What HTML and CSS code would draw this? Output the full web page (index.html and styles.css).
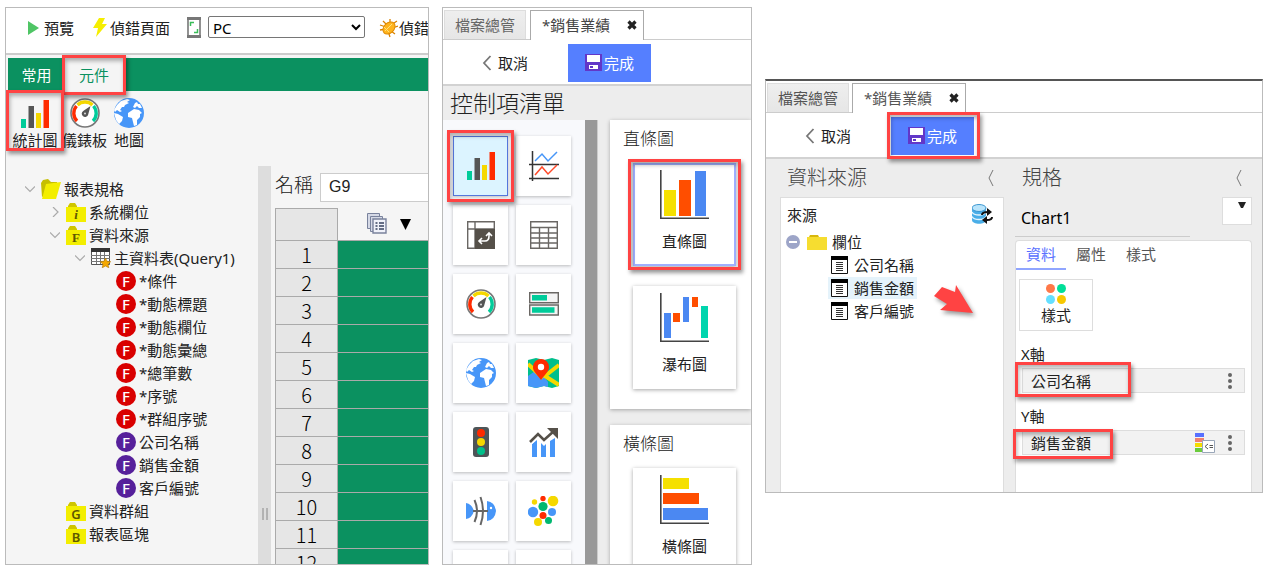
FILE: index.html
```
<!DOCTYPE html>
<html lang="zh-Hant">
<head>
<meta charset="utf-8">
<title>報表設計</title>
<link rel="stylesheet" href="styles.css">
</head>
<body>
<svg class="sprite" aria-hidden="true">
  <symbol id="chart" viewBox="0 0 28 28"><path fill="#00cc9a" d="M0 19h5v9H0z"/><path fill="#555" d="M7.500 6h5.500v22H7.500z"/><path fill="#f5d800" d="M15 13h5v15h-5z"/><path fill="#ff2b00" d="M22.500 0H28v28h-5.500z"/></symbol>
  <symbol id="gauge" viewBox="0 0 30 30"><circle cx="15" cy="15" r="14" fill="#fff" stroke="#777" stroke-width="1.600"/><g fill="none" stroke-width="3.400"><path stroke="#ff2b00" d="M7 23A11 11 0 0 1 6.500 8"/><path stroke="#f5d800" d="M7.500 7a11 11 0 0 1 15 0"/><path stroke="#00cc9a" d="M23.500 8A11 11 0 0 1 23 23"/></g><path fill="#555" d="M20.500 8l-2.300 8.500a3.300 3.300 0 1 1-5-3.600z"/><circle cx="15" cy="15.500" r="1" fill="#ddd"/></symbol>
  <symbol id="globe" viewBox="0 0 30 30"><circle cx="15" cy="15" r="15" fill="#4796f8"/><path fill="#fff" d="M3 7l4-4 6-2 3 1-3 2 2 1-4 2-1 2-2 0-2 3 2 1-2 1-3-2-2 2-1-2zM0 15l4 1 5 3-1 4-3 3-3-4zM17 13l3-2 5 1 3 3-2 1 0 3-3 3 0 5-3 1-2-8-4-1 0-4zM21 5l2-1 1 2 2 0 2 4-3 0-2-2-2 2-2-1z"/></symbol>
  <symbol id="save" viewBox="0 0 17 17"><path fill="#6237c8" d="M0 0h17v17H0z"/><path fill="#fff" d="M2 1h13v7H2zM4 11h9v4H4z"/><path fill="#6237c8" d="M5 12h3v2H5z"/></symbol>
  <symbol id="back" viewBox="0 0 10 16"><path d="M8.500 1L2 8l6.500 7" fill="none" stroke="#777" stroke-width="1.800"/></symbol>
  <symbol id="thin" viewBox="0 0 8 18"><path d="M6 1L2 9l4 8" fill="none" stroke="#777"/></symbol>
  <symbol id="close" viewBox="0 0 10 10"><path d="M1.500 1.500l7 7m0-7l-7 7" stroke="#222" stroke-width="3.200"/></symbol>
  <symbol id="down" viewBox="0 0 10 10"><path d="M0 2.500l5 5 5-5" fill="none" stroke="#aaa" stroke-width="1.200"/></symbol>
  <symbol id="right" viewBox="0 0 10 10"><path d="M3 0l5 5-5 5" fill="none" stroke="#aaa" stroke-width="1.200"/></symbol>
  <symbol id="folder" viewBox="0 0 20 20"><path fill="#cfc500" d="M2 3l2-3h5l2 3v3H2z"/><path fill="#f3ee00" d="M0 4h20v15H0z"/></symbol>
  <symbol id="opened" viewBox="0 0 20 20"><path fill="#c6bf00" d="M0 4l2-3 5-1 3 3h6v5L1 18z"/><path fill="#f3ee00" d="M5 5l15-2-5 17H1z"/></symbol>
  <symbol id="sheet" viewBox="0 0 20 20"><path fill="#fff" stroke="#555" d="M.5.5h18v16H.5z"/><path fill="#333" d="M0 0h19v4H0z"/><path stroke="#777" d="M0 7.500h19M0 10.500h19M0 13.500h19M5.500 4v12M9.500 4v12M13.500 4v12"/><path fill="#f4a800" stroke="#b67a00" stroke-width=".6" d="M14.500 10l1.500 3.200 3.700.5-2.700 2.500.8 3.600-3.300-1.800-3.300 1.800.8-3.600-2.700-2.500 3.700-.5z"/></symbol>
  <symbol id="field" viewBox="0 0 17 18"><path fill="#fff" stroke="#111" d="M.5.5h16v17H.5z"/><path fill="#000" d="M0 0h17v4H0z"/><path stroke="#333" d="M5 6.500h7M5 8.500h7M5 10.500h7M5 12.500h7M5 14.500h7"/></symbol>
  <symbol id="dots" viewBox="0 0 4 16"><g fill="#666"><circle cx="2" cy="2" r="2"/><circle cx="2" cy="8" r="2"/><circle cx="2" cy="14" r="2"/></g></symbol>
</svg>

<main class="page">
  <section class="panel designer">
    <div class="topbar">
      <button class="tool preview"><svg width="11" height="14" viewBox="0 0 11 14"><path fill="#4fc565" d="M0 0l11 7-11 7z"/></svg>預覽</button>
      <button class="tool debug"><svg width="14" height="19" viewBox="0 0 14 19"><path fill="#f5ee00" d="M6 0h6L9 6h5L3 19l2-9H0z"/></svg>偵錯頁面</button>
      <label class="device"><svg width="14" height="21" viewBox="0 0 14 21" aria-label="裝置"><path fill="none" stroke="#777" stroke-width="1.600" d="M1 1h12v19H1z"/><path fill="#777" d="M0 0h14v3H0zM0 18h14v3H0z"/><path fill="none" stroke="#39bd58" stroke-width="1.500" d="M3.500 9V5.500H7M10.500 12v3.500H7"/></svg>
        <select><option>PC</option></select></label>
      <button class="tool bug"><svg width="19" height="20" viewBox="0 0 19 20"><path d="M4 3l5 5m2-7v6m7-4l-6 4m7 1l-6 2m3 6l-4-3m-1 6l-2-6M1 12l6-1M1 7l6 2" stroke="#d98200" stroke-width="1.300"/><ellipse cx="10" cy="10" rx="7" ry="5" transform="rotate(-45 10 10)" fill="#ffb41e" stroke="#e08a00"/><path d="M6 13l7-7M5 9l5 5" stroke="#ffe27a"/></svg>偵錯</button>
    </div>
    <nav class="ribbon-tabs">
      <button class="ribbon-tab">常用</button>
      <button class="ribbon-tab active marked">元件</button>
    </nav>
    <div class="ribbon">
      <button class="gadget marked"><svg width="28" height="28"><use href="#chart"/></svg>統計圖</button>
      <button class="gadget"><svg width="30" height="30"><use href="#gauge"/></svg>儀錶板</button>
      <button class="gadget"><svg width="30" height="30"><use href="#globe"/></svg>地圖</button>
    </div>
    <div class="workspace">
      <ul class="tree">
        <li class="level0"><svg width="10" height="10"><use href="#down"/></svg><svg width="20" height="20"><use href="#opened"/></svg>報表規格</li>
        <li class="level1"><svg width="10" height="10"><use href="#right"/></svg><span class="folder"><svg width="20" height="20"><use href="#folder"/></svg><i>i</i></span>系統欄位</li>
        <li class="level1"><svg width="10" height="10"><use href="#down"/></svg><span class="folder serif"><svg width="20" height="20"><use href="#folder"/></svg><b>F</b></span>資料來源</li>
        <li class="level2"><svg width="10" height="10"><use href="#down"/></svg><svg width="20" height="20"><use href="#sheet"/></svg>主資料表(Query1)</li>
        <li class="level3"><span class="dot">F</span>*條件</li>
        <li class="level3"><span class="dot">F</span>*動態標題</li>
        <li class="level3"><span class="dot">F</span>*動態欄位</li>
        <li class="level3"><span class="dot">F</span>*動態彙總</li>
        <li class="level3"><span class="dot">F</span>*總筆數</li>
        <li class="level3"><span class="dot">F</span>*序號</li>
        <li class="level3"><span class="dot">F</span>*群組序號</li>
        <li class="level3"><span class="dot violet">F</span>公司名稱</li>
        <li class="level3"><span class="dot violet">F</span>銷售金額</li>
        <li class="level3"><span class="dot violet">F</span>客戶編號</li>
        <li class="level1 leaf"><span class="folder"><svg width="20" height="20"><use href="#folder"/></svg><b>G</b></span>資料群組</li>
        <li class="level1 leaf"><span class="folder"><svg width="20" height="20"><use href="#folder"/></svg><b>B</b></span>報表區塊</li>
      </ul>
      <div class="splitter"><svg width="6" height="12" viewBox="0 0 6 12"><path d="M1 0v12M5 0v12" stroke="#888"/></svg></div>
      <div class="canvas">
        <div class="name-row"><label for="cell">名稱</label><input id="cell" value="G9"></div>
        <table class="grid">
          <thead><tr><th></th><td><span class="column-head"><svg width="20" height="22" viewBox="0 0 20 22"><g fill="#d5d9e6" stroke="#79829c"><path d="M.5.5h12v15H.5z"/><path d="M3.500 3.500h12v15h-12z"/><path fill="#f0f2fa" stroke-width="1.400" d="M6 6h13v14H6z"/></g><path d="M8.500 10h2m1.500 0h5m-8.500 3h2m1.500 0h5m-8.500 3h2m1.500 0h5" stroke="#36415f" stroke-width="1.700"/></svg><svg width="11" height="11" viewBox="0 0 11 11"><path d="M0 0h11L5.500 11z"/></svg></span></td></tr></thead>
          <tbody>
            <tr><th>1</th><td></td></tr><tr><th>2</th><td></td></tr><tr><th>3</th><td></td></tr><tr><th>4</th><td></td></tr>
            <tr><th>5</th><td></td></tr><tr><th>6</th><td></td></tr><tr><th>7</th><td></td></tr><tr><th>8</th><td></td></tr>
            <tr><th>9</th><td></td></tr><tr><th>10</th><td></td></tr><tr><th>11</th><td></td></tr><tr><th>12</th><td></td></tr>
          </tbody>
        </table>
      </div>
    </div>
  </section>

  <section class="panel chooser">
    <nav class="file-tabs">
      <button class="file-tab">檔案總管</button>
      <button class="file-tab active">*銷售業績<svg width="10" height="10"><use href="#close"/></svg></button>
    </nav>
    <div class="actions">
      <button class="cancel"><svg width="10" height="16"><use href="#back"/></svg>取消</button>
      <button class="done"><svg width="17" height="17"><use href="#save"/></svg>完成</button>
    </div>
    <h2 class="list-title">控制項清單</h2>
    <div class="chooser-body">
      <div class="tiles">
        <button class="tile selected marked" aria-label="統計圖"><svg width="28" height="28"><use href="#chart"/></svg></button>
        <button class="tile" aria-label="折線圖"><svg width="30" height="30" viewBox="0 0 30 30" fill="none"><path d="M3.500 0v30M0 13.500h30M0 27.500h30" stroke="#333" stroke-width="1.500"/><path d="M6 10l7-7 6 7 9-9" stroke="#4796f8" stroke-width="1.500"/><path d="M6 24l7-8 6 7 9-9" stroke="#ff4b2b" stroke-width="1.500"/></svg></button>
        <button class="tile" aria-label="交叉表"><svg width="28" height="28" viewBox="0 0 28 28"><path d="M.7.7h26.600v26.600H.7zM0 8h28M8 0v28" fill="none" stroke="#6a6764" stroke-width="1.400"/><path d="M8 8h20v20H8z" fill="#555049"/><path d="M12 20h6q4 0 4-5v-3m-3 3l3-3 3 3m-10 2l-3 3 3 3" fill="none" stroke="#fff" stroke-width="1.600"/></svg></button>
        <button class="tile" aria-label="表格"><svg width="28" height="28" viewBox="0 0 28 28"><path d="M.7.7h26.600v26.600H.7zM0 6.500h28M0 12h28M0 17h28M0 22h28M9.500 6.500V28M18.500 6.500V28" fill="none" stroke="#6a6764" stroke-width="1.400"/></svg></button>
        <button class="tile" aria-label="儀錶板"><svg width="30" height="30"><use href="#gauge"/></svg></button>
        <button class="tile" aria-label="進度條"><svg width="30" height="24" viewBox="0 0 30 24"><path d="M.7.7h28.600v10H.7zM.7 13h28.600v10H.7z" fill="#f4f4f4" stroke="#6a6764" stroke-width="1.400"/><path d="M3 3h15v5.500H3zM3 15.300h22.500v5.500H3z" fill="#00cc9a"/></svg></button>
        <button class="tile" aria-label="地圖"><svg width="30" height="30"><use href="#globe"/></svg></button>
        <button class="tile" aria-label="地標"><svg width="31" height="30" viewBox="0 0 31 30"><path fill="#00bf8c" d="M0 2l8-2 8 2 8-2 7 2v26l-7 2-8-2-8 2-8-2z"/><path fill="#4796f8" d="M0 18l10-7 10 13v5l-4-1-8 2-8-2z"/><path d="M0 6l15 14M31 7L17 18l14 9" stroke="#f5d800" stroke-width="4" fill="none"/><path fill="#ff2b00" d="M13 22C7 14 5 13 5 9a8 8 0 0 1 16 0c0 4-2 5-8 13z"/><circle cx="13" cy="9" r="3.200" fill="#fff"/></svg></button>
        <button class="tile" aria-label="燈號"><svg width="16" height="30" viewBox="0 0 16 30"><rect width="16" height="30" rx="3" fill="#4d5558"/><circle cx="8" cy="6" r="4" fill="#ff2b00"/><circle cx="8" cy="15" r="4" fill="#f5d800"/><circle cx="8" cy="24" r="4" fill="#00c08a"/></svg></button>
        <button class="tile" aria-label="趨勢圖"><svg width="30" height="29" viewBox="0 0 30 29"><path fill="#4796f8" d="M3 16l5-4v17H3zM12 15l3 3 2-2v13h-5zM21 13l5-3v19h-5z"/><path d="M1 14l8-8 6 6 10-9" stroke="#fff" stroke-width="6" fill="none"/><path d="M1 14l8-8 6 6 10-9" stroke="#555049" stroke-width="2.600" fill="none"/><path fill="#555049" d="M18 0h11v11z"/></svg></button>
        <button class="tile" aria-label="魚骨圖"><svg width="30" height="30" viewBox="0 0 30 30"><path fill="#4796f8" d="M0 7q6 1 8 8-2 7-8 8zM21 5q8 1 9 10-1 9-9 10z"/><path d="M7 15h15M8.500 4q5 11 0 22M14.500 1q5 14 0 28" stroke="#666" stroke-width="2" fill="none"/><circle cx="25" cy="12" r="1.200" fill="#fff"/></svg></button>
        <button class="tile" aria-label="泡泡圖"><svg width="31" height="30" viewBox="0 0 31 30"><g fill="#f5d800"><circle cx="6.500" cy="6" r="2.700"/><circle cx="25" cy="5" r="5.300"/><circle cx="10" cy="26" r="4"/></g><g fill="#ff2b00"><circle cx="15" cy="2.500" r="2.700"/><circle cx="15" cy="19.500" r="3.500"/></g><g fill="#00b870"><circle cx="15" cy="10.500" r="4.600"/><circle cx="20.500" cy="24.500" r="3.500"/></g><g fill="#4796f8"><circle cx="5" cy="16" r="5.200"/><circle cx="24" cy="16" r="4"/></g></svg></button>
        <button class="tile" aria-label="其他"></button>
        <button class="tile" aria-label="其他"></button>
      </div>
      <div class="scroller"></div>
      <div class="groups">
        <section class="group">
          <h3>直條圖</h3>
          <button class="kind selected marked"><svg width="49" height="49" viewBox="0 0 49 49"><path d="M.8 0v48.200H49" stroke="#444" stroke-width="1.600" fill="none"/><path fill="#f5e000" d="M4 20h12v26H4z"/><path fill="#ff4e00" d="M19 10h12v36H19z"/><path fill="#4b88f2" d="M35 1h11v45H35z"/></svg>直條圖</button>
          <button class="kind"><svg width="49" height="49" viewBox="0 0 49 49"><path d="M.8 0v48.200H49" stroke="#444" stroke-width="1.600" fill="none"/><path fill="#4b88f2" d="M4 20h7v25H4zM23 4h6v25h-6z"/><path fill="#ff4e00" d="M13 20h7v9h-7zM32 4h6v10h-6z"/><path fill="#00d5ae" d="M41 13h7v32h-7z"/></svg>瀑布圖</button>
        </section>
        <section class="group">
          <h3>橫條圖</h3>
          <button class="kind"><svg width="49" height="49" viewBox="0 0 49 49"><path d="M.8 0v48.200H49" stroke="#444" stroke-width="1.600" fill="none"/><path fill="#f5e000" d="M3 3h26v11H3z"/><path fill="#ff4e00" d="M3 18h36v11H3z"/><path fill="#4b88f2" d="M3 33h45v12H3z"/></svg>橫條圖</button>
        </section>
      </div>
    </div>
  </section>

  <section class="panel settings">
    <nav class="file-tabs">
      <button class="file-tab">檔案總管</button>
      <button class="file-tab active">*銷售業績<svg width="10" height="10"><use href="#close"/></svg></button>
    </nav>
    <div class="actions">
      <button class="cancel"><svg width="10" height="16"><use href="#back"/></svg>取消</button>
      <button class="done marked"><svg width="17" height="17"><use href="#save"/></svg>完成</button>
    </div>
    <div class="settings-body">
      <section class="source">
        <h2 class="section-title">資料來源<svg width="8" height="18"><use href="#thin"/></svg></h2>
        <div class="source-card">
          <div class="source-head">來源<svg width="21" height="21" viewBox="0 0 21 21"><path fill="#4aaee8" d="M0 4v12c0 5 14 5 14 0V4z"/><ellipse cx="7" cy="4" rx="7" ry="3.500" fill="#b9e4fb" stroke="#3b96d0"/><path d="M0 8c2 4 12 4 14 0M0 12.500c2 4 12 4 14 0" fill="none" stroke="#e3f5ff" stroke-width="1.500"/><path d="M10 11q0-3 6-3" fill="none" stroke="#111" stroke-width="2"/><path d="M15 4l5 4-5 4zM15 12l-5 4 5 4z" fill="#111"/><path d="M20 13q0 3-5 3" fill="none" stroke="#111" stroke-width="2"/></svg></div>
          <ul class="fields">
            <li class="root"><svg width="14" height="14" viewBox="0 0 14 14"><circle cx="7" cy="7" r="7" fill="#9da5c8"/><path d="M3 7h8" stroke="#fff" stroke-width="2"/></svg><svg width="20" height="15" viewBox="0 0 20 15"><path fill="#d8b70c" d="M2 2l1-2h8l1 2v2H2z"/><path fill="#f6dd30" d="M0 2h20v13H0z"/></svg>欄位</li>
            <li><svg width="17" height="18"><use href="#field"/></svg>公司名稱</li>
            <li class="chosen"><svg width="17" height="18"><use href="#field"/></svg>銷售金額</li>
            <li><svg width="17" height="18"><use href="#field"/></svg>客戶編號</li>
          </ul>
          <svg class="pointer" width="40" height="36" viewBox="0 0 40 36"><path fill="#ff4343" d="M0 12L8 3l13 5 1-7 17 28-33-3 7-6z"/></svg>
        </div>
      </section>
      <section class="spec">
        <h2 class="section-title">規格<svg width="8" height="18"><use href="#thin"/></svg></h2>
        <div class="chart-name"><span>Chart1</span><button aria-label="選擇圖表"><svg width="8" height="6" viewBox="0 0 8 6"><path d="M0 0h8L5 6H3z" fill="#222"/></svg></button></div>
        <div class="spec-card">
          <nav class="spec-tabs"><button class="active">資料</button><button>屬性</button><button>樣式</button></nav>
          <div class="spec-content">
            <button class="style-button"><svg width="20" height="20" viewBox="0 0 20 20"><circle cx="4.500" cy="4.500" r="4.500" fill="#ff7848"/><circle cx="15.500" cy="4.500" r="4.500" fill="#00df98"/><circle cx="4.500" cy="15.500" r="4.500" fill="#65dfff"/><circle cx="15.500" cy="15.500" r="4.500" fill="#f8c800"/></svg>樣式</button>
            <h4>X軸</h4>
            <div class="axis"><span class="marked">公司名稱</span><svg width="4" height="16"><use href="#dots"/></svg></div>
            <h4>Y軸</h4>
            <div class="axis y"><span class="marked">銷售金額</span><svg width="20" height="20" viewBox="0 0 20 20"><path fill="#5870ff" d="M0 0h9v4H0z"/><path fill="#f08070" d="M0 5h9v4H0z"/><path fill="#f5dc00" d="M0 10h7v4H0z"/><path fill="#6acb3c" d="M0 15h7v4H0z"/><path fill="#fff" stroke="#99a6b8" d="M7.500 7.500h12v12h-12z"/><path d="M13 11l-3 2.500 3 2.500M14.500 12.500H18M14.500 14.500H18" fill="none" stroke="#555"/></svg><svg width="4" height="16"><use href="#dots"/></svg></div>
          </div>
        </div>
      </section>
    </div>
  </section>
</main>
</body>
</html>
```

FILE: styles.css
```
* { box-sizing: border-box; }
body { margin: 0; background: #fff; color: #222; font: 15px/22px "Noto Sans", "Noto Sans CJK TC", sans-serif; }
button { border: 0; padding: 0; background: none; color: inherit; font: inherit; white-space: nowrap; }
ul, h2, h3, h4 { margin: 0; padding: 0; font-weight: 400; list-style: none; }
svg { flex: none; }
.sprite { position: absolute; width: 0; height: 0; }
.page { display: grid; grid-template-columns: 424fr 310fr 498fr; gap: 13px; height: 100vh; padding: 7px 6px 4px 5px; }
.panel { display: flex; flex-direction: column; min-width: 0; min-height: 0; overflow: hidden; border: 1px solid #bbb; }

.marked { position: relative; }
.marked::after { content: ""; position: absolute; z-index: 2; inset: -4px; border: 3px solid #ff4343; box-shadow: 2px 3px 4px rgba(0,0,0,.4), inset 1px 3px 4px rgba(0,0,0,.3); pointer-events: none; }

/* Designer */
.designer { background: #f5f5f5; }
.topbar { display: flex; align-items: center; flex: none; height: 47px; padding: 0 0 6px 22px; background: #fff; border-bottom: 2px solid #ccc; }
.tool { display: flex; align-items: center; flex: none; gap: 4px; }
.preview { gap: 5px; margin-right: 19px; }
.debug { margin-right: 17px; gap: 3px; }
.device { display: flex; align-items: center; flex: none; gap: 7px; margin-right: 14px; }
.device select { width: 157px; height: 22px; padding: 0 0 1px; margin-bottom: 2px; border: 1px solid #767676; border-radius: 2px; background: #fff; font: inherit; line-height: 20px; color: #000; }
.bug { gap: 1px; }
.ribbon-tabs { display: flex; flex: none; height: 33px; margin: 3px 0 0 2px; background: #0b9160; }
.ribbon-tab { width: 57px; color: #fff; line-height: 32px; }
.ribbon-tab.active { background: #f5f5f5; color: #0b9160; width: 58px; }
.ribbon { display: flex; flex: none; height: 60px; gap: 7px; padding: 2px 0 0 4px; }
.gadget { display: flex; flex-direction: column; align-items: center; justify-content: flex-end; line-height: 22px; }
.gadget svg { margin-bottom: 1px; }
.gadget.marked { width: 50px; margin-right: -5px; }
.workspace { display: flex; flex: 1; min-height: 0; padding-top: 15px; }
.tree { flex: none; width: 252px; padding-top: 11px; }
.tree li { display: flex; align-items: center; height: 23px; gap: 3px; }
.tree li > svg:first-child { margin-right: 3px; }
.level0 { padding-left: 19px; }
.level1 { padding-left: 44px; }
.level2 { padding-left: 69px; }
.level3 { padding-left: 110px; }
.tree .leaf { padding-left: 60px; }
.folder { display: grid; place-items: center; width: 20px; height: 20px; color: #5d5800; font-size: 13px; line-height: 20px; }
.folder > * { grid-area: 1 / 1; }
.folder b, .folder i { padding-top: 3px; font-weight: 600; }
.folder i, .serif { font-family: "Liberation Serif", serif; font-weight: 700; }
.dot { width: 20px; height: 20px; border-radius: 50%; background: #d90000; color: #fff; font: 500 15px/20px "Noto Sans", sans-serif; text-align: center; }
.violet { background: #56209b; }
.splitter { display: flex; flex: none; align-items: center; justify-content: center; width: 13px; padding-top: 298px; background: #ddd; }
.canvas { flex: 1; min-width: 0; padding: 7px 0 0 4px; }
.name-row { display: flex; align-items: center; gap: 7px; height: 29px; font-size: 19px; font-weight: 300; }
.name-row label { flex: none; padding-bottom: 5px; line-height: 24px; }
.name-row input { flex: 1; min-width: 0; height: 29px; padding: 0 8px 2px; border: 1px solid #ccc; border-right: 0; color: #222; font: 16px "Liberation Sans", sans-serif; }
.grid { width: 100%; margin-top: 6px; border-collapse: collapse; table-layout: fixed; }
.grid th, .grid td { height: 28px; padding: 0; border: 1px solid #aaa; border-right: 0; }
.grid th { width: 62px; background: #e6e6e6; font: 300 20px/27px "Noto Sans CJK TC", sans-serif; color: #000; text-align: center; }
.grid tbody td { background: #0b9160; }
.grid thead th { height: 32px; }
.grid thead td { border-top: 0; height: 32px; }
.column-head { display: flex; align-items: center; gap: 13px; padding-left: 29px; }

/* File tabs and actions */
.file-tabs { display: flex; flex: none; gap: 4px; height: 32px; padding: 2px 0 0 1px; border-bottom: 1px solid #ccc; background: #fff; }
.file-tab { width: 82px; border: 1px solid #ddd; border-bottom: 0; background: linear-gradient(#eee, #e6e6e6); color: #666; line-height: 26px; }
.file-tab.active { display: flex; align-items: center; justify-content: space-between; width: 114px; padding: 0 6px 2px 11px; border-color: #aaa; background: #fff; color: #444; margin-bottom: -1px; }
.actions { display: flex; flex: none; align-items: center; height: 46px; padding: 1px 0 0 39px; background: #fff; border-bottom: 2px solid #d2d2d2; gap: 40px; }
.cancel, .done { display: flex; align-items: center; height: 38px; }
.cancel { gap: 6px; }
.done { justify-content: center; gap: 2px; width: 83px; background: #557fff; color: #fff; }

/* Control chooser */
.chooser { background: #ededed; }
.list-title { flex: none; height: 34px; padding-left: 7px; font-size: 23px; font-weight: 300; line-height: 34px; }
.chooser-body { display: flex; flex: 1; min-height: 0; }
.tiles { display: grid; flex: none; grid-template-columns: 55px 55px; grid-auto-rows: 60px; align-content: start; gap: 9px 8px; width: 142px; padding: 16px 10px; background: #f8f9fc; }
.tile { display: grid; place-items: center; background: #fff; box-shadow: 0 1px 3px rgba(0,0,0,.25); }
.tile.selected { border: 1px solid #5577dd; background: #dcf4ff; }
.tile.marked::after { inset: -7px; }
.scroller { flex: none; width: 13px; background: #999; border-right: 1px solid #ccc; }
.groups { flex: 1; min-width: 0; padding-left: 12px; }
.group { display: flex; flex-direction: column; gap: 20px; margin-bottom: 16px; padding: 5px 15px 20px 23px; background: #fff; box-shadow: 0 1px 4px rgba(0,0,0,.3); }
.group h3 { margin: 0 0 -15px -10px; font-size: 17px; font-weight: 300; line-height: 28px; }
.group h3 + .kind { margin-top: 5px; }
.kind { display: flex; flex-direction: column; align-items: center; gap: 11px; height: 103px; padding-top: 7px; background: #fff; box-shadow: 0 1px 4px rgba(0,0,0,.35); }
.kind.selected { padding-top: 5px; border: 2px solid #a0b0ff; }
.kind.marked::after { inset: -6px -7px; }

/* Chart settings */
.settings { align-self: start; margin-top: 72px; border-top: 2px solid #555; background: #ededed; }
.settings .file-tab { color: #555; }
.settings .file-tabs { gap: 3px; }
.settings-body { display: flex; gap: 11px; padding: 0 10px 0 14px; }
.source { display: flex; flex: 224; flex-direction: column; }
.spec { flex: 237; min-width: 0; }
.section-title { display: flex; align-items: center; justify-content: space-between; height: 38px; padding: 0 9px 0 7px; color: #444; font-size: 20px; font-weight: 300; }
.source-card { position: relative; flex: 1; border: 1px solid #ddd; border-bottom: 0; background: #fff; }
.source-head { display: flex; align-items: center; justify-content: space-between; height: 33px; padding: 0 10px 0 6px; }
.fields li { display: flex; align-items: center; gap: 6px; width: 89px; height: 22px; margin: 0 0 1px 47px; padding-left: 3px; }
.fields .root { gap: 7px; width: auto; height: 22px; margin-left: 5px; padding: 0; }
.fields .root svg + svg { margin-right: -2px; }
.fields .chosen { background: #e5f3fb; }
.pointer { position: absolute; top: 86px; left: 153px; filter: drop-shadow(2px 3px 2px rgba(0,0,0,.4)); }
.chart-name { display: flex; justify-content: space-between; height: 43px; color: #000; font-size: 16px; }
.chart-name span { flex: none; width: 175px; height: 40px; padding: 10px 0 0 6px; border-bottom: 1px solid #ccc; line-height: 22px; }
.chart-name button { display: flex; justify-content: flex-end; width: 30px; height: 28px; padding: 4px 5px; border: 1px solid #ddd; background: #fff; }
.spec-card { border-radius: 4px 4px 0 0; border: 1px solid #ddd; border-bottom: 0; background: #fff; }
.spec-tabs { display: flex; }
.spec-tabs button { width: 50px; height: 29px; padding-bottom: 4px; color: #555; }
.spec-tabs .active { border-bottom: 2px solid #90a5ff; color: #5870ff; padding-bottom: 2px; }
.spec-content { padding: 9px 6px 25px 3px; }
.style-button { display: flex; flex-direction: column; align-items: center; justify-content: center; width: 74px; height: 52px; margin-bottom: 12px; border: 1px solid #ddd; }
.spec-content h4 { padding-left: 2px; height: 25px; line-height: 22px; }
.axis { display: flex; align-items: center; height: 25px; margin: 0 0 12px 3px; padding: 0 12px 0 8px; border: 1px solid #ddd; background: #f2f2f2; }
.axis span { margin-right: auto; }
.axis svg + svg { margin-left: 13px; }
.axis .marked::after { inset: -8px -40px -5px -16px; }
.axis.y .marked::after { inset: -3px -22px -5px -18px; }
.settings .done.marked::after { inset: -5px -6px -4px -4px; }
.ribbon-tab.marked::after { inset: -3px -3px -4px -3px; }
.gadget.marked::after { inset: -3px -4px 0 -4px; }
```
